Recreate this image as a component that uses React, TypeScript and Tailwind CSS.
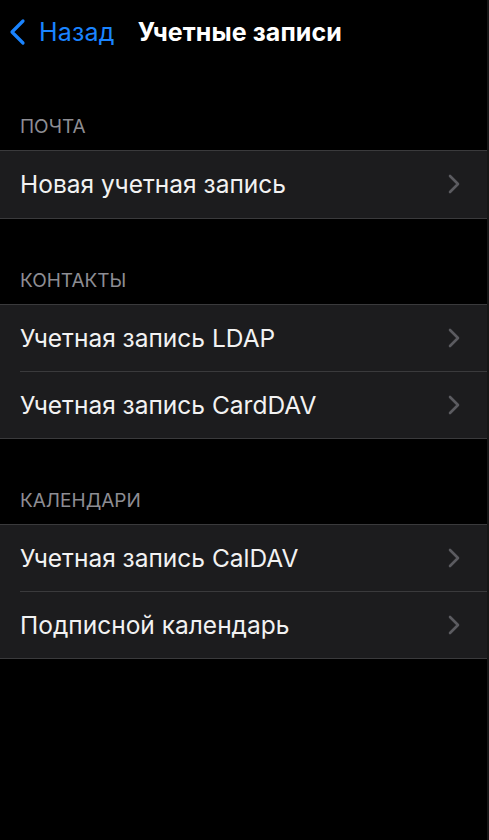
import React from "react";

const sections = [
  { title: "ПОЧТА", items: ["Новая учетная запись"] },
  { title: "КОНТАКТЫ", items: ["Учетная запись LDAP", "Учетная запись CardDAV"] },
  { title: "КАЛЕНДАРИ", items: ["Учетная запись CalDAV", "Подписной календарь"] },
];

function Chevron() {
  return (
    <svg width="12" height="20" viewBox="0 0 12 20" fill="none" className="shrink-0">
      <path d="M2 2l8 8-8 8" stroke="#5b5b60" strokeWidth="2.6" strokeLinecap="round" strokeLinejoin="round" />
    </svg>
  );
}

export default function App() {
  return (
    <div className="flex min-h-[840px] w-[489px] bg-black text-white" style={{ fontFamily: "Inter, 'Noto Sans', sans-serif" }}>
      <div className="flex-1">
        {/* nav bar */}
        <div className="flex h-[64px] items-center">
          <div className="flex items-center pl-[8px] text-[#1a84ff]">
            <svg width="18" height="28" viewBox="0 0 18 28" fill="none">
              <path d="M15 3L4 14l11 11" stroke="#1a84ff" strokeWidth="3.2" strokeLinecap="round" strokeLinejoin="round" />
            </svg>
            <span className="ml-[13px] text-[25px] leading-none tracking-[0.2px]">Назад</span>
          </div>
          <span className="ml-[23px] text-[25px] font-bold leading-none tracking-[0.1px]">Учетные записи</span>
        </div>

        {sections.map((s, i) => (
          <div key={s.title} className={i === 0 ? "pt-[51px]" : "pt-[50px]"}>
            <div className="px-[20px] pb-[12px] text-[19px] leading-[23px] text-[#8d8d93]">{s.title}</div>
            <div className="border-y border-[#3a3a3c] bg-[#1c1c1e]">
              {s.items.map((item, j) => (
                <div key={item} className="pl-[20px]">
                  <div
                    className={`flex h-[66.5px] items-center justify-between pr-[27px] ${
                      j > 0 ? "border-t border-[#3a3a3c]" : ""
                    }`}
                  >
                    <span className="text-[24.5px] leading-none tracking-[0px] text-[#f2f2f2]">{item}</span>
                    <Chevron />
                  </div>
                </div>
              ))}
            </div>
          </div>
        ))}
      </div>
      <div className="w-[2px] bg-[#161616]" />
    </div>
  );
}
